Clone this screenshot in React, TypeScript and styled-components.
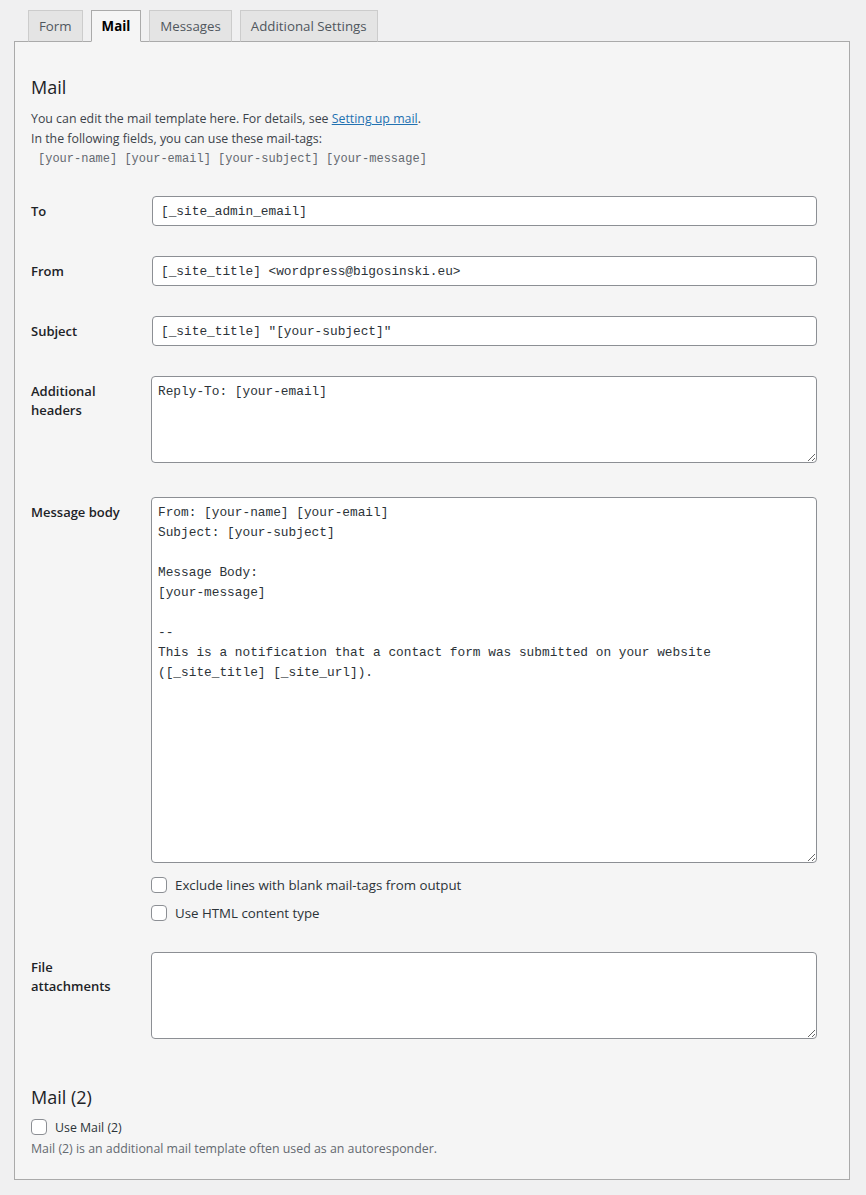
import * as React from 'react'
import styled, { createGlobalStyle } from 'styled-components'

const GlobalStyle = createGlobalStyle`
  body {
    margin: 0;
    background: #f0f0f1;
    color: #3c434a;
    font-family: "Open Sans", "Noto Sans", sans-serif;
    font-size: 12.35px;
  }
`

const Page = styled.div`
  padding: 10px 16px 15px 14px;
`

const TabBar = styled.ul`
  display: flex;
  gap: 8px;
  margin: 0;
  padding: 0 0 0 14px;
  list-style: none;
  border-bottom: 1px solid #aaa;
`

const Tab = styled.li<{ $active?: boolean }>`
  margin-bottom: -1px;
  padding: 5px 10px;
  line-height: 20px;
  font-size: 13.3px;
  border: 1px solid ${p => (p.$active ? '#aaa' : '#ccc')};
  border-bottom-color: ${p => (p.$active ? '#f5f5f5' : '#aaa')};
  background: ${p => (p.$active ? '#f5f5f5' : '#e4e4e4')};
  color: ${p => (p.$active ? '#000' : '#50575e')};
  font-weight: ${p => (p.$active ? 700 : 400)};
`

const Panel = styled.div`
  background: #f5f5f5;
  border: 1px solid #aaa;
  border-top: none;
  padding: 16px;
`

const Heading = styled.h2<{ $top: number }>`
  margin: ${p => p.$top}px 0 10px;
  font-size: 18px;
  font-weight: 400;
  line-height: 23px;
  color: #1d2327;
`

const Intro = styled.p`
  margin: 0 0 12px;
  line-height: 20px;
`

const Link = styled.a`
  color: #2271b1;
  text-decoration: underline;
`

const Tags = styled.span`
  display: block;
  padding-left: 7px;
  font-family: "Liberation Mono", "DejaVu Sans Mono", monospace;
  font-size: 12px;
  color: #646970;
  white-space: pre;
`

const Row = styled.div`
  display: flex;
  padding: 15px 0;
`

const Label = styled.label`
  flex: 0 0 120px;
  box-sizing: border-box;
  padding: 6px 24px 0 0;
  font-size: 13px;
  font-weight: 600;
  line-height: 19px;
  color: #1d2327;
`

const FieldCell = styled.div`
  flex: 1;
  padding-right: 16px;
  display: flex;
  flex-direction: column;
`

const TextInput = styled.input`
  box-sizing: border-box;
  width: calc(100% - 1px);
  height: 30px;
  margin: 0 0 0 1px;
  padding: 0 8px;
  border: 1px solid #8c8f94;
  border-radius: 4px;
  background: #fff;
  color: #2c3338;
  font-family: "Liberation Mono", "DejaVu Sans Mono", monospace;
  font-size: 12.8px;
`

const TextArea = styled.textarea<{ $height: number }>`
  display: block;
  box-sizing: border-box;
  width: 100%;
  height: ${p => p.$height}px;
  margin: 0 0 4px;
  padding: 5px 6px 2px;
  border: 1px solid #8c8f94;
  border-radius: 4px;
  background: #fff;
  color: #2c3338;
  font-family: "Liberation Mono", "DejaVu Sans Mono", monospace;
  font-size: 12.8px;
  line-height: 20px;
`

const CheckList = styled.div`
  display: flex;
  flex-direction: column;
  gap: 12px;
  margin-top: 10px;
  padding-bottom: 1px;
`

const CheckLabel = styled.label<{ $size: number }>`
  display: flex;
  align-items: center;
  gap: 8px;
  height: 16px;
  font-size: ${p => p.$size}px;
  color: #2c3338;
`

const Checkbox = styled.input.attrs({ type: 'checkbox' })`
  appearance: none;
  box-sizing: border-box;
  width: 16px;
  height: 16px;
  margin: 0;
  border: 1px solid #8c8f94;
  border-radius: 4px;
  background: #fff;
`

const Note = styled.p`
  margin: 4px 0 4px;
  line-height: 20px;
  color: #646970;
`

const messageBody = `From: [your-name] [your-email]
Subject: [your-subject]

Message Body:
[your-message]

--
This is a notification that a contact form was submitted on your website
([_site_title] [_site_url]).`

const tabs = ['Form', 'Mail', 'Messages', 'Additional Settings']

export default function App() {
  return (
    <Page>
      <GlobalStyle />
      <TabBar>
        {tabs.map(t => (
          <Tab key={t} $active={t === 'Mail'}>{t}</Tab>
        ))}
      </TabBar>
      <Panel>
        <Heading $top={18}>Mail</Heading>
        <Intro>
          You can edit the mail template here. For details, see <Link href="#">Setting up mail</Link>.
          <br />
          In the following fields, you can use these mail-tags:
          <Tags>[your-name] [your-email] [your-subject] [your-message]</Tags>
        </Intro>

        <Row>
          <Label>To</Label>
          <FieldCell>
            <TextInput defaultValue="[_site_admin_email]" />
          </FieldCell>
        </Row>
        <Row>
          <Label>From</Label>
          <FieldCell>
            <TextInput defaultValue="[_site_title] <wordpress@bigosinski.eu>" />
          </FieldCell>
        </Row>
        <Row>
          <Label>Subject</Label>
          <FieldCell>
            <TextInput defaultValue={'[_site_title] "[your-subject]"'} />
          </FieldCell>
        </Row>
        <Row>
          <Label>Additional headers</Label>
          <FieldCell>
            <TextArea $height={87} defaultValue="Reply-To: [your-email]" />
          </FieldCell>
        </Row>
        <Row>
          <Label>Message body</Label>
          <FieldCell>
            <TextArea $height={366} defaultValue={messageBody} />
            <CheckList>
              <CheckLabel $size={13.3}>
                <Checkbox />
                Exclude lines with blank mail-tags from output
              </CheckLabel>
              <CheckLabel $size={13.3}>
                <Checkbox />
                Use HTML content type
              </CheckLabel>
            </CheckList>
          </FieldCell>
        </Row>
        <Row>
          <Label>File attachments</Label>
          <FieldCell>
            <TextArea $height={87} />
          </FieldCell>
        </Row>

        <Heading $top={28}>Mail (2)</Heading>
        <CheckLabel $size={12.35}>
          <Checkbox />
          Use Mail (2)
        </CheckLabel>
        <Note>Mail (2) is an additional mail template often used as an autoresponder.</Note>
      </Panel>
    </Page>
  )
}
